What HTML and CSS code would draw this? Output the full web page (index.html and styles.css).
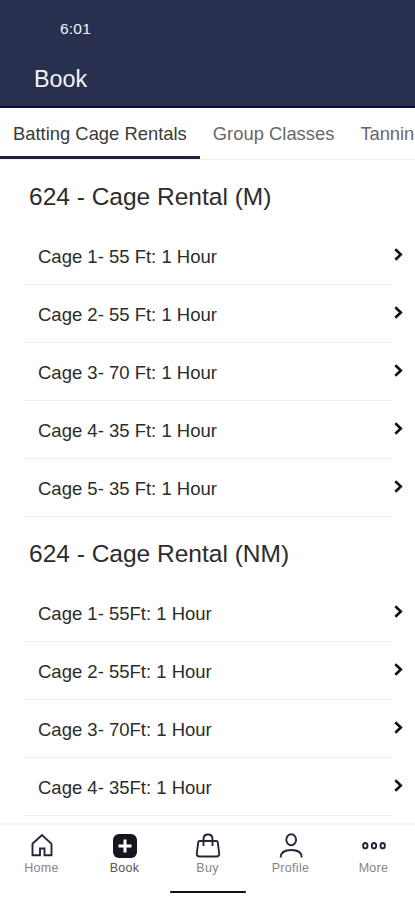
FILE: index.html
```html
<!DOCTYPE html>
<html lang="en">
<head>
<meta charset="utf-8">
<meta name="viewport" content="width=device-width, initial-scale=1">
<title>Book</title>
<link rel="stylesheet" href="styles.css">
</head>
<body>
<svg class="defs" width="0" height="0"><symbol id="chevron" viewBox="0 0 9 13"><path d="M1.3 1.3 6.8 6.5 1.3 11.7" fill="none" stroke="currentColor" stroke-width="2.6"/></symbol></svg>
<header class="header">
  <div class="time">6:01</div>
  <h1 class="title">Book</h1>
</header>
<nav class="tabs">
  <a class="tab active">Batting Cage Rentals</a>
  <a class="tab">Group Classes</a>
  <a class="tab last">Tannin</a>
</nav>
<main class="content">
  <section>
    <h2 class="heading">624 - Cage Rental (M)</h2>
    <ul class="list">
      <li class="row"><span>Cage 1- 55 Ft: 1 Hour</span><svg class="chevron"><use href="#chevron"/></svg></li>
      <li class="row"><span>Cage 2- 55 Ft: 1 Hour</span><svg class="chevron"><use href="#chevron"/></svg></li>
      <li class="row"><span>Cage 3- 70 Ft: 1 Hour</span><svg class="chevron"><use href="#chevron"/></svg></li>
      <li class="row"><span>Cage 4- 35 Ft: 1 Hour</span><svg class="chevron"><use href="#chevron"/></svg></li>
      <li class="row"><span>Cage 5- 35 Ft: 1 Hour</span><svg class="chevron"><use href="#chevron"/></svg></li>
    </ul>
  </section>
  <section>
    <h2 class="heading">624 - Cage Rental (NM)</h2>
    <ul class="list">
      <li class="row"><span>Cage 1- 55Ft: 1 Hour</span><svg class="chevron"><use href="#chevron"/></svg></li>
      <li class="row"><span>Cage 2- 55Ft: 1 Hour</span><svg class="chevron"><use href="#chevron"/></svg></li>
      <li class="row"><span>Cage 3- 70Ft: 1 Hour</span><svg class="chevron"><use href="#chevron"/></svg></li>
      <li class="row"><span>Cage 4- 35Ft: 1 Hour</span><svg class="chevron"><use href="#chevron"/></svg></li>
    </ul>
  </section>
</main>
<footer class="footer">
  <nav class="nav">
    <a class="item"><svg class="icon" viewBox="0 0 26 26"><path d="M3.500 10.800 13 2l9.500 8.800V22.300H15.500v-6.800h-4.500v6.800H3.500z"/></svg><span>Home</span></a>
    <a class="item current"><svg class="icon" viewBox="0 0 26 26"><rect class="solid" x="1" y="1" width="24" height="24" rx="6"/><path class="plus" d="M13 6.500v13M6.500 13h13"/></svg><span>Book</span></a>
    <a class="item"><svg class="icon" viewBox="0 0 26 26"><path d="M4.500 8h17q1 0 1.200 1l1.500 11.500q.2 3-2.700 3h-17q-2.900 0-2.700-3L3.300 9q.2-1 1.200-1zM8.500 13V6q0-4.500 4.500-4.500T17.500 6v7"/></svg><span>Buy</span></a>
    <a class="item"><svg class="icon" viewBox="0 0 26 26"><ellipse cx="13.200" cy="6.700" rx="4.900" ry="5.500"/><path d="M2.700 24.500c0-4.700 3.700-7.500 10.500-7.500s10.500 2.800 10.500 7.500"/></svg><span>Profile</span></a>
    <a class="item"><svg class="icon" viewBox="0 0 26 26"><ellipse cx="4.300" cy="12.700" rx="2.200" ry="2.700"/><ellipse cx="13" cy="12.700" rx="2.200" ry="2.700"/><ellipse cx="21.700" cy="12.700" rx="2.200" ry="2.700"/></svg><span>More</span></a>
  </nav>
  <div class="handle"></div>
</footer>
</body>
</html>
```
FILE: styles.css
```css
* { box-sizing: border-box; }
body {
  margin: 0;
  height: 900px;
  display: flex;
  flex-direction: column;
  overflow: hidden;
  background: #fff;
  color: #2c2c2c;
  font-family: "Liberation Sans", Arial, sans-serif;
}
.defs { position: absolute; }
.header {
  flex: none;
  height: 108px;
  padding: 19px 0 0 35px;
  background: #292f4f;
  border-bottom: 2px solid #0b0b45;
  color: #f4f4f8;
}
.time { padding-left: 25px; font-size: 15.500px; line-height: 19px; letter-spacing: .2px; }
.title { margin: 27px 0 0 -1px; font-size: 23.300px; font-weight: 400; line-height: 28px; }
.tabs {
  flex: none;
  display: flex;
  height: 52px;
  overflow: hidden;
  border-bottom: 1px solid #eee;
}
.tab {
  flex: none;
  padding: 0 13px;
  height: 51px;
  font-size: 18.400px;
  line-height: 51px;
  color: #686868;
  white-space: nowrap;
}
.active { color: #3a3a3a; border-bottom: 3px solid #202136; }
.last { padding-right: 0; letter-spacing: -.1px; }
.content { flex: 1; min-height: 0; overflow: hidden; }
.heading {
  height: 67px;
  margin: 0;
  padding: 4px 0 0 29px;
  font-size: 24.500px;
  font-weight: 400;
  line-height: 66px;
}
.list { margin: 0 22px 0 24px; padding: 0; list-style: none; }
.row {
  display: flex;
  align-items: center;
  justify-content: space-between;
  height: 58px;
  padding: 2px 0 0 14px;
  border-bottom: 1px solid #f0f0f0;
  font-size: 18.500px;
}
.chevron { flex: none; width: 9px; height: 13px; margin: -5px -10px 0 0; color: #111; }
.footer { flex: none; height: 77px; border-top: 2px solid #f5f5f5; background: #fff; }
.nav { display: grid; grid-template-columns: repeat(5, 1fr); }
.item {
  display: flex;
  flex-direction: column;
  align-items: center;
  padding-top: 8px;
  color: #858585;
  font-size: 12.500px;
  line-height: 15px;
  letter-spacing: .3px;
}
.current { color: #555; }
.icon {
  width: 26px;
  height: 26px;
  margin-bottom: 2px;
  fill: none;
  stroke: #25263a;
  stroke-width: 1.900;
}
.solid { fill: #15161d; stroke: none; }
.plus { stroke: #fff; stroke-width: 3; }
.handle { width: 76px; height: 2px; margin: 15px auto 0; border-radius: 1px; background: #111; }
```
